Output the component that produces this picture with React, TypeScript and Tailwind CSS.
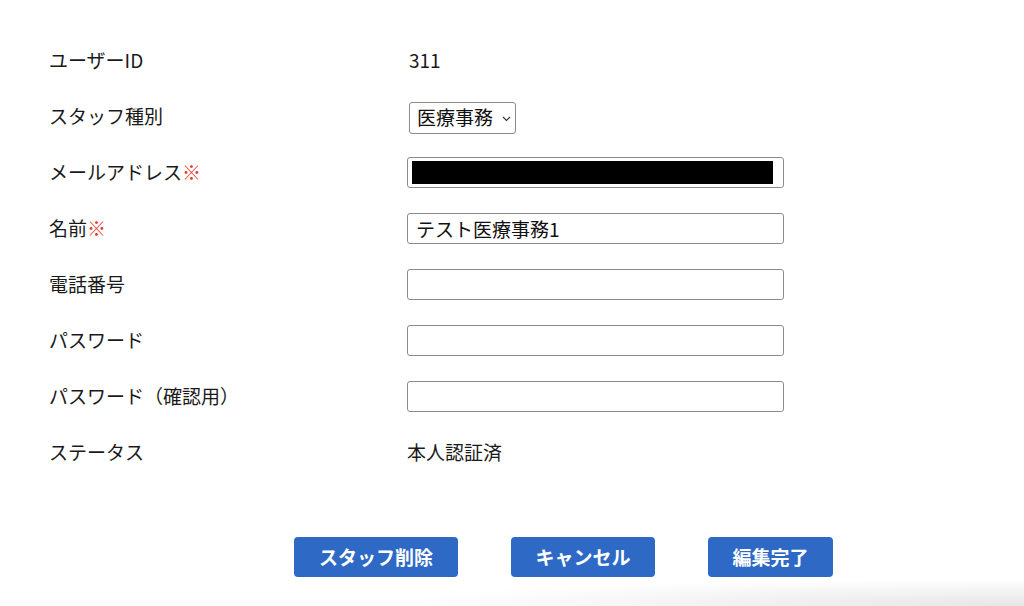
import { useState } from 'react'

const font = { fontFamily: '"Noto Sans CJK JP", "Noto Sans", sans-serif' }

function Row({ label, required, children }: { label: string; required?: boolean; children: React.ReactNode }) {
  return (
    <div className="flex h-[56px] items-center">
      <div className="w-[358px] shrink-0 text-[19px] text-[#1a1a1a]">
        {label}
        {required && <span className="text-[#e5372c]">※</span>}
      </div>
      <div className="flex items-center">{children}</div>
    </div>
  )
}

function TextBox({ value, onChange }: { value: string; onChange: (v: string) => void }) {
  return (
    <input
      value={value}
      onChange={(e) => onChange(e.target.value)}
      className="h-[31px] w-[377px] rounded-[3px] border border-[#8c8c8c] px-[8px] text-[19px] text-[#111] outline-none"
      style={font}
    />
  )
}

export default function App() {
  const [name, setName] = useState('テスト医療事務1')
  const [tel, setTel] = useState('')
  const [pw, setPw] = useState('')
  const [pw2, setPw2] = useState('')

  return (
    <div className="relative h-[606px] w-[1024px] overflow-hidden bg-white" style={font}>
      <div className="pl-[49px] pt-[32px]">
        <Row label="ユーザーID">
          <span className="pl-[2px] text-[19px] text-[#1a1a1a]">311</span>
        </Row>
        <Row label="スタッフ種別">
          <div className="relative ml-[2px] mt-[3px]">
            <select
              className="h-[32px] w-[107px] appearance-none rounded-[3px] border border-[#8c8c8c] bg-white pl-[7px] text-[19px] text-[#111] outline-none"
              style={font}
              defaultValue="医療事務"
            >
              <option>医療事務</option>
              <option>医師</option>
              <option>看護師</option>
            </select>
            {/* chevron */}
            <svg className="pointer-events-none absolute right-[5px] top-[14px]" width="9" height="6" viewBox="0 0 9 6" fill="none">
              <path d="M1 1l3.5 3.5L8 1" stroke="#333" strokeWidth="1.1" />
            </svg>
          </div>
        </Row>
        <Row label="メールアドレス" required>
          <div className="h-[31px] w-[377px] rounded-[3px] border border-[#8c8c8c] pb-[3px] pl-[4px] pr-[10px] pt-[3px]">
            <div className="h-full bg-black" />
          </div>
        </Row>
        <Row label="名前" required>
          <TextBox value={name} onChange={setName} />
        </Row>
        <Row label="電話番号">
          <TextBox value={tel} onChange={setTel} />
        </Row>
        <Row label="パスワード">
          <TextBox value={pw} onChange={setPw} />
        </Row>
        <Row label="パスワード（確認用）">
          <TextBox value={pw2} onChange={setPw2} />
        </Row>
        <Row label="ステータス">
          <span className="text-[19px] text-[#1a1a1a]">本人認証済</span>
        </Row>
      </div>

      <div className="mt-[57px] flex gap-[53px] pl-[294px]">
        <button className="h-[40px] w-[164px] rounded-[4px] bg-[#2e69c5] text-[19px] font-bold text-white">スタッフ削除</button>
        <button className="h-[40px] w-[144px] rounded-[4px] bg-[#2e69c5] text-[19px] font-bold text-white">キャンセル</button>
        <button className="h-[40px] w-[125px] rounded-[4px] bg-[#2e69c5] text-[19px] font-bold text-white">編集完了</button>
      </div>

      {/* faint shadow of the panel below */}
      <div className="pointer-events-none absolute bottom-0 right-0 h-[26px] w-[600px] bg-[radial-gradient(ellipse_at_bottom_right,#e6e6e6,rgba(255,255,255,0)_75%)]" />
    </div>
  )
}
